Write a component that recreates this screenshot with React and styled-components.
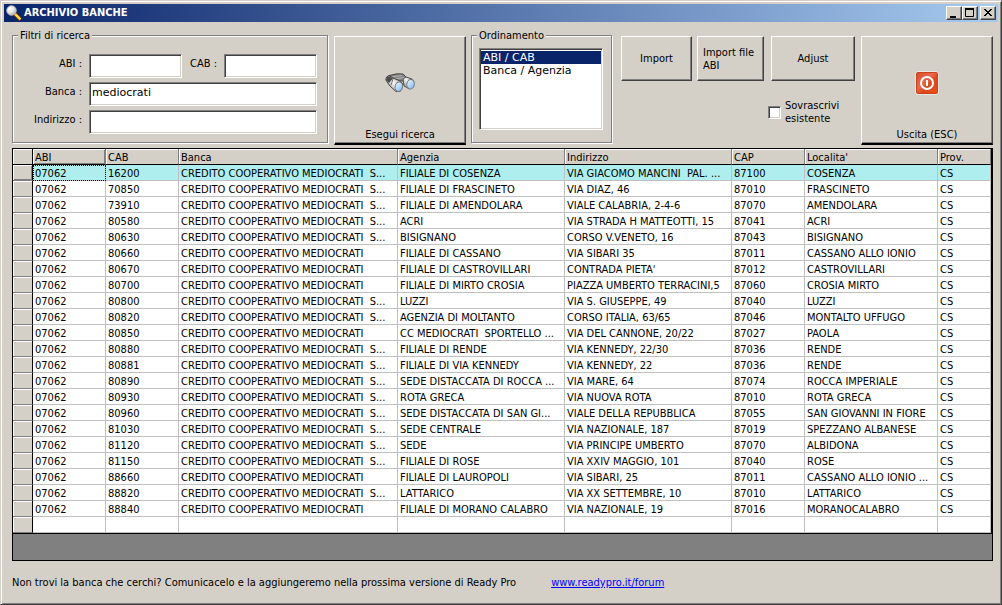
import React, { useState } from "react";
import styled, { createGlobalStyle, css } from "styled-components";

const face = "#d4d0c8";
const shade = "#808080";
const dark = "#404040";
const navy = "#0a246a";
const uiFont = `Tahoma, "DejaVu Sans Condensed", "Noto Sans", sans-serif`;
const wideFont = `Verdana, "DejaVu Sans", sans-serif`;

const GlobalStyle = createGlobalStyle`
  * { box-sizing: border-box; }
  body {
    margin: 0;
    background: ${face};
    color: #000;
    font: 11px/13px ${uiFont};
  }
  button, input, select { font: inherit; color: inherit; border-radius: 0; }
`;

const sunken = css`
  border: 1px solid;
  border-color: ${shade} #fff #fff ${shade};
  box-shadow: inset 1px 1px 0 ${dark}, inset -1px -1px 0 ${face};
`;

const Window = styled.main`
  min-height: 100vh;
  display: flex;
  flex-direction: column;
  padding: 3px;
  background: ${face};
  border: 1px solid;
  border-color: ${face} ${dark} ${dark} ${face};
  box-shadow: inset 1px 1px 0 #fff, inset -1px -1px 0 ${shade};
`;

const TitleBar = styled.header`
  display: flex;
  align-items: center;
  height: 18px;
  padding: 0 2px;
  background: linear-gradient(to right, ${navy}, #a6caf0);
`;

const Title = styled.h1`
  flex: 1;
  margin: 0 0 0 2px;
  color: #fff;
  font-size: 11px;
  line-height: 18px;
`;

const CaptionButton = styled.button`
  width: 16px;
  height: 14px;
  padding: 0;
  margin-left: ${(p) => (p.$apart ? "2px" : "0")};
  display: flex;
  background: ${face};
  border: 1px solid;
  border-color: #fff ${dark} ${dark} #fff;
  box-shadow: inset -1px -1px 0 ${shade};
`;

const Body = styled.div`
  padding: 8px 5px 8px 8px;
`;

const Toolbar = styled.div`
  display: flex;
  align-items: flex-end;
  height: 115px;
`;

const Group = styled.fieldset`
  flex: ${(p) => (p.$grow ? "1 1 0" : "0 0 auto")};
  width: ${(p) => (p.$grow ? "auto" : "141px")};
  min-width: 0;
  height: 114px;
  margin: ${(p) => (p.$grow ? "0 1px 2px 0" : "0 1px 2px 5px")};
  padding: ${(p) => (p.$grow ? "12px 10px 0 0" : "6px 8px 0 7px")};
  border: 1px solid ${shade};
  box-shadow: 1px 1px 0 #fff, inset 1px 1px 0 #fff;
`;

const Legend = styled.legend`
  margin-left: ${(p) => (p.$outdent ? "-2px" : "5px")};
  padding: 0 2px;
  background: ${face};
`;

const Fields = styled.div`
  display: grid;
  grid-template-columns: 76px 1fr 42px 1fr;
  row-gap: 4px;
`;

const FieldLabel = styled.label`
  padding: 3px 7px 0 0;
  text-align: right;
  white-space: nowrap;
`;

const TextBox = styled.input`
  ${sunken}
  min-width: 0;
  width: 100%;
  height: 24px;
  grid-column: ${(p) => (p.$wide ? "span 3" : "auto")};
  padding: 0 2px 4px;
  background: #fff;
  font-family: ${wideFont};
  outline: none;
`;

const PushButton = styled.button`
  flex: none;
  width: ${(p) => p.$width}px;
  height: 45px;
  margin-left: ${(p) => p.$gap}px;
  padding: 0 5px;
  text-align: ${(p) => (p.$left ? "left" : "center")};
  background: ${face};
  border: 1px solid;
  border-color: #fff ${dark} ${dark} #fff;
  box-shadow: inset -1px -1px 0 ${shade};
`;

const TallButton = styled(PushButton)`
  height: 109px;
  padding: 0 0 2px;
  display: flex;
  flex-direction: column;
  align-items: center;
  border-bottom: 2px solid #000;
`;

const IconArea = styled.span`
  flex: 1;
  display: flex;
  align-items: center;
`;

const SortList = styled.select`
  ${sunken}
  display: block;
  width: 100%;
  height: 82px;
  padding: 2px 1px 1px;
  overflow: hidden;
  background: #fff;
  font-family: ${wideFont};
  outline: none;
`;

const SortOption = styled.option`
  min-height: 13px;
  height: 13px;
  padding: 0 2px;
  line-height: 13px;
  &:checked {
    color: #fff !important;
    background: ${navy} linear-gradient(${navy}, ${navy});
  }
`;

const ImportPanel = styled.div`
  height: 109px;
  margin-left: 8px;
`;

const ButtonRow = styled.div`
  display: flex;
`;

const Overwrite = styled.label`
  display: flex;
  align-items: center;
  gap: 4px;
  width: 87px;
  margin: 18px 0 0 auto;
`;

const CheckBox = styled.input`
  ${sunken}
  appearance: none;
  flex: none;
  width: 13px;
  height: 13px;
  margin: 0;
  background: #fff;
  &:checked { background: ${navy}; }
`;

const GridFrame = styled.div`
  margin-top: 3px;
  padding-bottom: 26px;
  background: ${shade};
  border: 1px solid #000;
`;

const Table = styled.table`
  width: 100%;
  table-layout: fixed;
  border-collapse: separate;
  border-spacing: 0;
  border-right: 1px solid #000;
  border-bottom: 1px solid #000;
  background: #fff;
`;

const HeadCell = styled.th`
  height: 16px;
  padding: 2px 2px 0;
  overflow: hidden;
  white-space: nowrap;
  text-align: left;
  font-weight: normal;
  line-height: 13px;
  background: ${face};
  border-right: 1px solid ${(p) => (p.$corner ? "#000" : shade)};
  border-bottom: 1px solid #000;
  box-shadow: inset 1px 1px 0 #fff${(p) => (p.$active ? `, inset -1px -1px 0 ${shade}` : "")};
`;

const Cell = styled.td`
  height: 16px;
  padding: 2px 0 0 2px;
  overflow: hidden;
  white-space: pre;
  line-height: 13px;
  border-right: 1px solid #c0c0c0;
  border-bottom: 1px solid #c0c0c0;
  outline: ${(p) => (p.$focused ? "1px dotted #000" : "none")};
  outline-offset: -1px;
`;

const RowHeader = styled.td`
  height: 16px;
  padding: 0;
  background: ${face};
  border-right: 1px solid #000;
  border-bottom: 1px solid ${shade};
  box-shadow: inset 1px 1px 0 #fff${(p) => (p.$active ? `, inset -1px -1px 0 ${shade}` : "")};
`;

const Row = styled.tr`
  background: ${(p) => (p.$selected ? "#afeeee" : "#fff")};
`;

const Footer = styled.footer`
  display: flex;
  gap: 35px;
  margin-top: 15px;
  line-height: 14px;
  white-space: nowrap;
`;

const ForumLink = styled.a`
  color: #0000ff;
  text-decoration: underline;
`;

const Magnifier = () => (
  <svg width="16" height="16" viewBox="0 0 16 16" aria-hidden="true">
    <defs>
      <radialGradient id="lens" cx="0.35" cy="0.3" r="0.8">
        <stop offset="0" stopColor="#fff" />
        <stop offset="0.5" stopColor="#e4e4e4" />
        <stop offset="1" stopColor="#a8a8a8" />
      </radialGradient>
    </defs>
    <path d="M8.500 8.500 14.500 14.500" stroke="#601c08" strokeWidth="4" />
    <path d="M9 9 14.500 14.500" stroke="#ffcf20" strokeWidth="2.500" />
    <path d="M10 9.500 14 13.500" stroke="#fff59a" strokeWidth="1" />
    <circle cx="5.500" cy="5.500" r="4.700" fill="url(#lens)" stroke="#c8c8c8" strokeWidth="1" />
    <path d="M3 5Q3 3 5 3" fill="none" stroke="#fff" strokeWidth="1.500" />
  </svg>
);

const Binoculars = () => (
  <svg width="30" height="20" viewBox="0 0 30 20" aria-hidden="true">
    <defs>
      <linearGradient id="barrel" x1="0" y1="1" x2="1" y2="0.2">
        <stop offset="0" stopColor="#666" />
        <stop offset="0.3" stopColor="#bbb" />
        <stop offset="0.55" stopColor="#f4f4f4" />
        <stop offset="1" stopColor="#8a8a8a" />
      </linearGradient>
      <linearGradient id="glass" x1="0" y1="0" x2="1" y2="1">
        <stop offset="0" stopColor="#eef8ff" />
        <stop offset="1" stopColor="#7cb8f8" />
      </linearGradient>
    </defs>
    <path d="M4 2.500 12 0.800 18 1 21 4 20 8 8 8Z" fill="#858585" stroke="#444" />
    <path d="M7 4 17 2.500M9 6 19 4.500" stroke="#b4b4b4" />
    <path d="M18 6 21 4 27 6 29 9 24 15.500 19 13Z" fill="url(#barrel)" stroke="#555" />
    <path d="M0.800 7 1.500 4 4 2.500 8 5 14 7.500 18 11 15 18.500 11 18.500 5 13Z" fill="url(#barrel)" stroke="#444" />
    <path d="M1 7 2 4 4 3 8 5.500 4 10Z" fill="#4c4c4c" />
    <path d="M8 6 6 12" stroke="#777" />
    <ellipse cx="13.800" cy="13.700" rx="3.700" ry="4.800" fill="url(#glass)" stroke="#777" transform="rotate(12 13.800 13.700)" />
    <ellipse cx="25.500" cy="11.300" rx="3.700" ry="4.800" fill="url(#glass)" stroke="#777" transform="rotate(12 25.500 11.300)" />
  </svg>
);

const Power = () => (
  <svg width="24" height="24" viewBox="0 0 24 24" aria-hidden="true">
    <defs>
      <linearGradient id="red" x1="0" y1="0" x2="1" y2="1">
        <stop offset="0" stopColor="#d84a30" />
        <stop offset="0.4" stopColor="#e8694c" />
        <stop offset="0.6" stopColor="#dc4a20" />
        <stop offset="1" stopColor="#ec5018" />
      </linearGradient>
    </defs>
    <rect x="0.500" y="0.500" width="23" height="23" rx="2" fill="#fff" />
    <rect x="1.500" y="1.500" width="21" height="21" rx="1" fill="url(#red)" stroke="#c8401c" />
    <circle cx="12" cy="12" r="6" fill="none" stroke="#fff" strokeWidth="2" />
    <path d="M12 9V15" stroke="#fff" strokeWidth="2" />
  </svg>
);

const captionIcons = {
  Minimize: <path d="M3 10H9" strokeWidth="2" />,
  Maximize: (
    <>
      <path d="M2 2H11" strokeWidth="2" />
      <path d="M2.500 2V9.500H10.500V2" />
    </>
  ),
  Close: <path d="M3 2 10 9M4 2 11 9M10 2 3 9M11 2 4 9" />,
};

const CaptionIcon = ({ name }) => (
  <svg width="14" height="12" viewBox="0 0 14 12" fill="none" stroke="#000" aria-hidden="true">
    {captionIcons[name]}
  </svg>
);

const columns = [
  { title: "ABI", width: 73 },
  { title: "CAB", width: 73 },
  { title: "Banca" },
  { title: "Agenzia", width: 167 },
  { title: "Indirizzo", width: 167 },
  { title: "CAP", width: 73 },
  { title: "Localita'", width: 133 },
  { title: "Prov.", width: 53 },
];

const bank = "CREDITO COOPERATIVO MEDIOCRATI";
const bankCut = `${bank}  S...`;

const branches = [
  ["16200", bankCut, "FILIALE DI COSENZA", "VIA GIACOMO MANCINI  PAL. ...", "87100", "COSENZA"],
  ["70850", bankCut, "FILIALE DI FRASCINETO", "VIA DIAZ, 46", "87010", "FRASCINETO"],
  ["73910", bankCut, "FILIALE DI AMENDOLARA", "VIALE CALABRIA, 2-4-6", "87070", "AMENDOLARA"],
  ["80580", bankCut, "ACRI", "VIA STRADA H MATTEOTTI, 15", "87041", "ACRI"],
  ["80630", bankCut, "BISIGNANO", "CORSO V.VENETO, 16", "87043", "BISIGNANO"],
  ["80660", bank, "FILIALE DI CASSANO", "VIA SIBARI 35", "87011", "CASSANO ALLO IONIO"],
  ["80670", bank, "FILIALE DI CASTROVILLARI", "CONTRADA PIETA'", "87012", "CASTROVILLARI"],
  ["80700", bank, "FILIALE DI MIRTO CROSIA", "PIAZZA UMBERTO TERRACINI,5", "87060", "CROSIA MIRTO"],
  ["80800", bankCut, "LUZZI", "VIA S. GIUSEPPE, 49", "87040", "LUZZI"],
  ["80820", bankCut, "AGENZIA DI MOLTANTO", "CORSO ITALIA, 63/65", "87046", "MONTALTO UFFUGO"],
  ["80850", bank, "CC MEDIOCRATI  SPORTELLO ...", "VIA DEL CANNONE, 20/22", "87027", "PAOLA"],
  ["80880", bankCut, "FILIALE DI RENDE", "VIA KENNEDY, 22/30", "87036", "RENDE"],
  ["80881", bankCut, "FILIALE DI VIA KENNEDY", "VIA KENNEDY, 22", "87036", "RENDE"],
  ["80890", bankCut, "SEDE DISTACCATA DI ROCCA ...", "VIA MARE, 64", "87074", "ROCCA IMPERIALE"],
  ["80930", bankCut, "ROTA GRECA", "VIA NUOVA ROTA", "87010", "ROTA GRECA"],
  ["80960", bankCut, "SEDE DISTACCATA DI SAN GI...", "VIALE DELLA REPUBBLICA", "87055", "SAN GIOVANNI IN FIORE"],
  ["81030", bankCut, "SEDE CENTRALE", "VIA NAZIONALE, 187", "87019", "SPEZZANO ALBANESE"],
  ["81120", bankCut, "SEDE", "VIA PRINCIPE UMBERTO", "87070", "ALBIDONA"],
  ["81150", bankCut, "FILIALE DI ROSE", "VIA XXIV MAGGIO, 101", "87040", "ROSE"],
  ["88660", bank, "FILIALE DI LAUROPOLI", "VIA SIBARI, 25", "87011", "CASSANO ALLO IONIO ..."],
  ["88820", bankCut, "LATTARICO", "VIA XX SETTEMBRE, 10", "87010", "LATTARICO"],
  ["88840", bank, "FILIALE DI MORANO CALABRO", "VIA NAZIONALE, 19", "87016", "MORANOCALABRO"],
].map((row) => ["07062", ...row, "CS"]);

const gridRows = [...branches, columns.map(() => "")];

export default function App() {
  const [selected, setSelected] = useState(0);

  return (
    <Window>
      <GlobalStyle />
      <TitleBar>
        <Magnifier />
        <Title>ARCHIVIO BANCHE</Title>
        <CaptionButton aria-label="Minimize"><CaptionIcon name="Minimize" /></CaptionButton>
        <CaptionButton aria-label="Maximize"><CaptionIcon name="Maximize" /></CaptionButton>
        <CaptionButton aria-label="Close" $apart><CaptionIcon name="Close" /></CaptionButton>
      </TitleBar>
      <Body>
        <Toolbar>
          <Group $grow>
            <Legend>Filtri di ricerca</Legend>
            <Fields>
              <FieldLabel htmlFor="abi">ABI :</FieldLabel>
              <TextBox id="abi" />
              <FieldLabel htmlFor="cab">CAB :</FieldLabel>
              <TextBox id="cab" />
              <FieldLabel htmlFor="banca">Banca :</FieldLabel>
              <TextBox id="banca" $wide defaultValue="mediocrati" />
              <FieldLabel htmlFor="indirizzo">Indirizzo :</FieldLabel>
              <TextBox id="indirizzo" $wide />
            </Fields>
          </Group>
          <TallButton $width={132} $gap={5}>
            <IconArea><Binoculars /></IconArea>
            Esegui ricerca
          </TallButton>
          <Group>
            <Legend $outdent>Ordinamento</Legend>
            <SortList size={2} defaultValue="abi" aria-label="Ordinamento">
              <SortOption value="abi">ABI / CAB</SortOption>
              <SortOption value="banca">Banca / Agenzia</SortOption>
            </SortList>
          </Group>
          <ImportPanel>
            <ButtonRow>
              <PushButton $width={71} $gap={0}>Import</PushButton>
              <PushButton $width={67} $gap={5} $left>Import file ABI</PushButton>
              <PushButton $width={84} $gap={7}>Adjust</PushButton>
            </ButtonRow>
            <Overwrite>
              <CheckBox type="checkbox" />
              Sovrascrivi esistente
            </Overwrite>
          </ImportPanel>
          <TallButton $width={132} $gap={6}>
            <IconArea><Power /></IconArea>
            Uscita (ESC)
          </TallButton>
        </Toolbar>
        <GridFrame>
          <Table>
            <colgroup>
              <col width="20" />
              {columns.map((c) => <col key={c.title} width={c.width} />)}
            </colgroup>
            <thead>
              <tr>
                <HeadCell $corner />
                {columns.map((c, i) => (
                  <HeadCell key={c.title} scope="col" $active={i === 0}>{c.title}</HeadCell>
                ))}
              </tr>
            </thead>
            <tbody>
              {gridRows.map((row, r) => (
                <Row key={r} $selected={r === selected} onClick={() => setSelected(r)}>
                  <RowHeader $active={r === selected} />
                  {row.map((text, c) => (
                    <Cell key={c} $focused={r === selected && c === 0}>{text}</Cell>
                  ))}
                </Row>
              ))}
            </tbody>
          </Table>
        </GridFrame>
        <Footer>
          <span>Non trovi la banca che cerchi? Comunicacelo e la aggiungeremo nella prossima versione di Ready Pro</span>
          <ForumLink href="http://www.readypro.it/forum">www.readypro.it/forum</ForumLink>
        </Footer>
      </Body>
    </Window>
  );
}
